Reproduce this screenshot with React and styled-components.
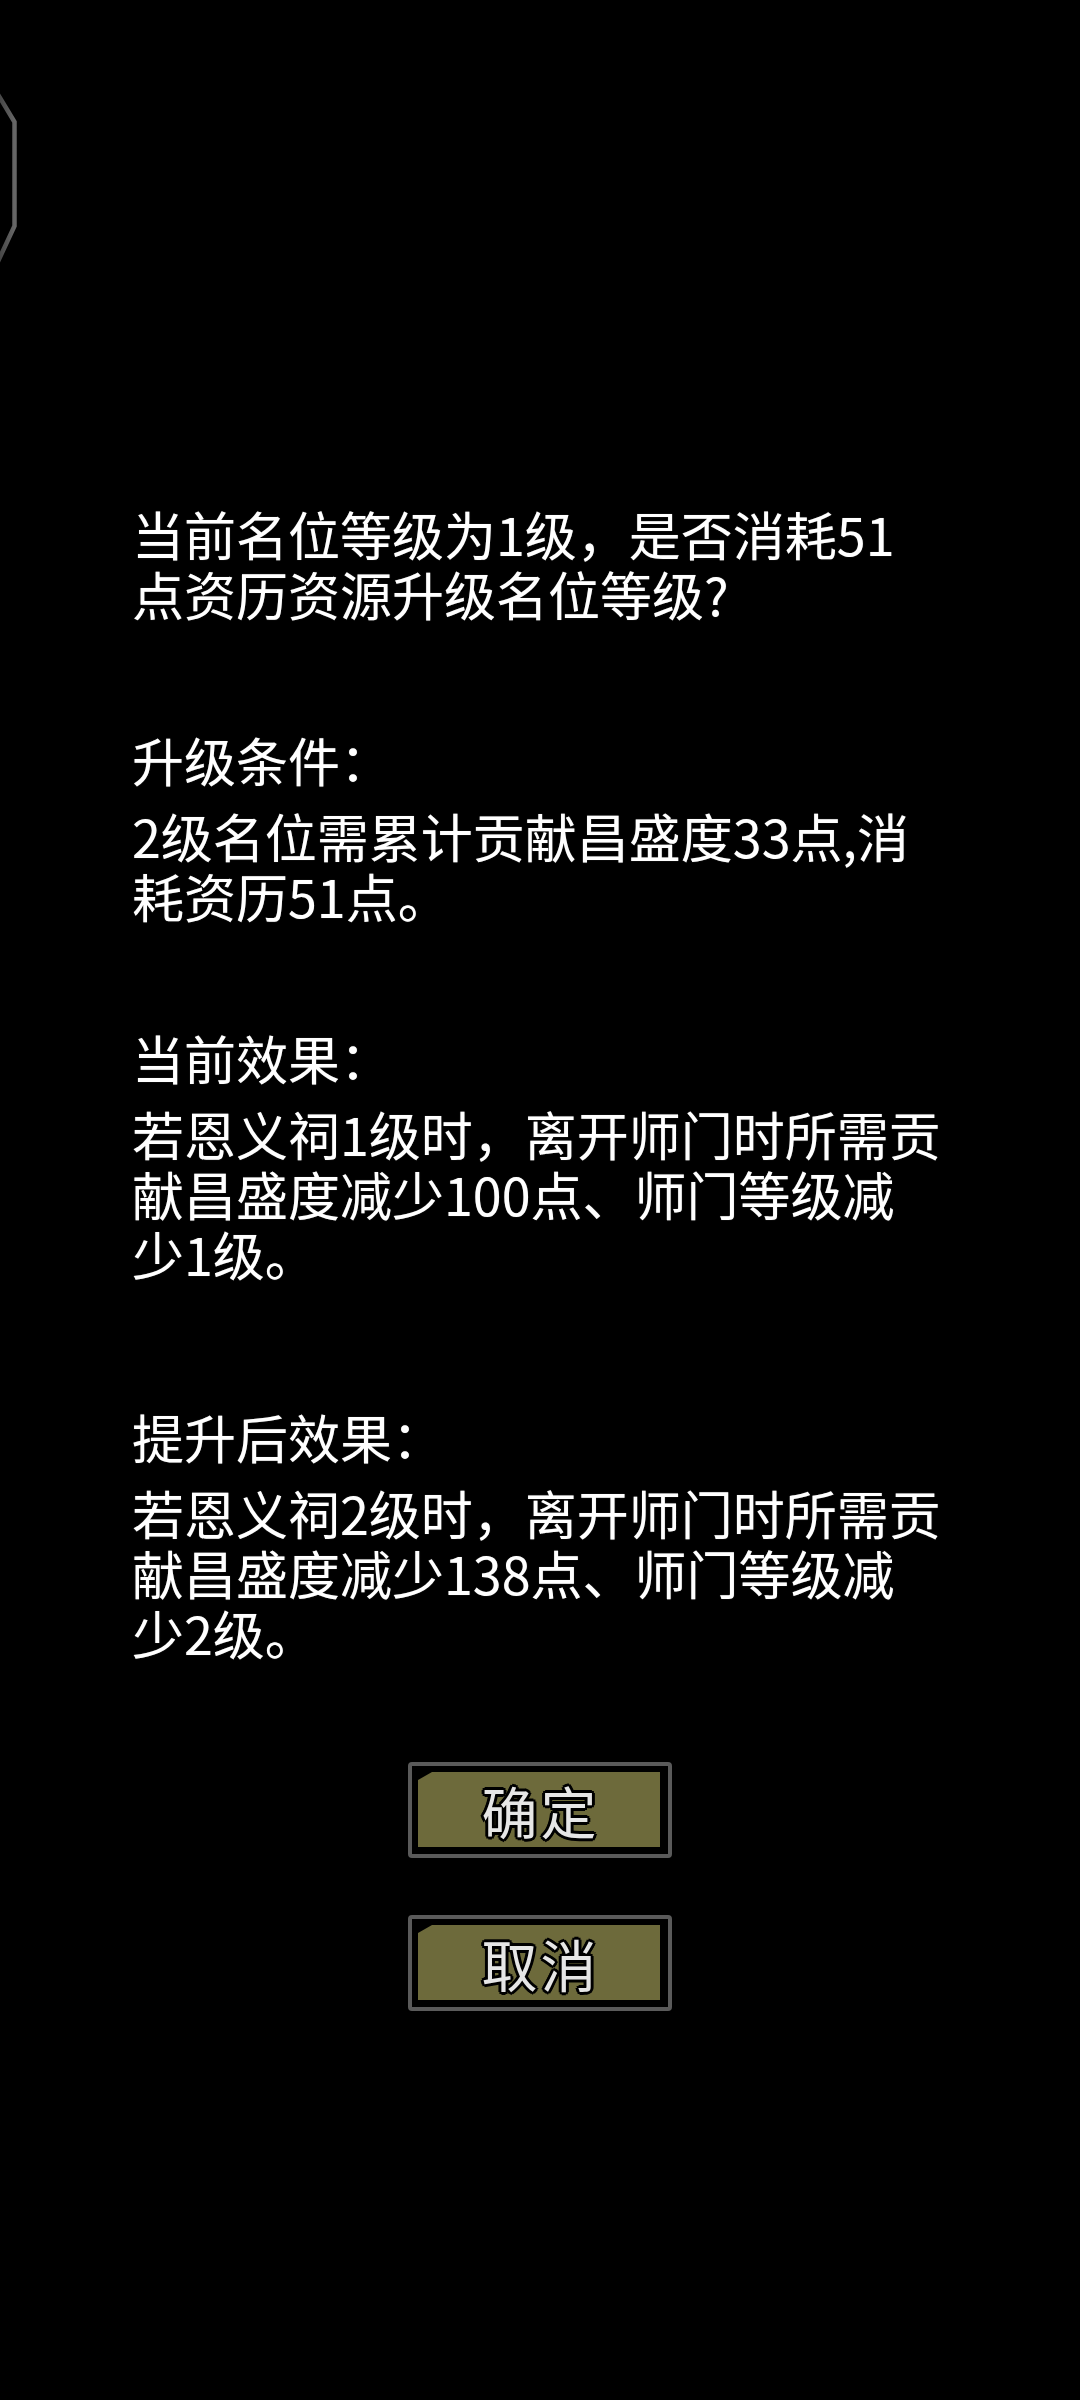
import React from "react";
import styled, { createGlobalStyle } from "styled-components";

const Global = createGlobalStyle`
  html, body {
    margin: 0;
    padding: 0;
    background: #000;
  }
  body {
    font-family: "Noto Sans CJK SC", "Noto Sans", sans-serif;
  }
`;

const Page = styled.div`
  position: relative;
  width: 1080px;
  height: 2400px;
  background: #000;
  overflow: hidden;
  box-sizing: border-box;
  padding-top: 504px;
  display: flex;
  flex-direction: column;
`;

const Frame = styled.svg`
  position: absolute;
  left: 0;
  top: 80px;
  width: 24px;
  height: 220px;
`;

const Content = styled.div`
  padding-left: 132px;
  display: flex;
  flex-direction: column;
`;

const Section = styled.section`
  margin-top: ${(p) => p.$gap || 0}px;
  display: flex;
  flex-direction: column;
  gap: 16px;
`;

const Heading = styled.div`
  font-size: 52px;
  font-weight: 400;
  line-height: 60px;
  color: #fff;
  text-shadow: 0 0 1px #666;
  white-space: nowrap;
`;

const Body = styled.p`
  margin: 0;
  width: 812px;
  font-size: 52px;
  font-weight: 400;
  line-height: 60px;
  color: #fff;
  text-shadow: 0 0 1px #666;
`;

const Buttons = styled.div`
  margin-top: 99px;
  display: flex;
  flex-direction: column;
  align-items: center;
  gap: 57px;
`;

const ButtonFrame = styled.button`
  width: 264px;
  height: 96px;
  box-sizing: border-box;
  border: 4px solid #5a5a5a;
  border-radius: 4px;
  background: #000;
  padding: 6px 8px 7px 6px;
  margin: 0;
  display: flex;
  cursor: pointer;
`;

const ButtonFace = styled.span`
  flex: 1;
  display: flex;
  align-items: center;
  justify-content: center;
  background: #6d6a3b;
  clip-path: polygon(14px 0, 100% 0, 100% 100%, 0 100%, 0 8px);
  font-family: "Noto Sans CJK SC", "Noto Sans", sans-serif;
  font-size: 56px;
  font-weight: 400;
  line-height: 1;
  letter-spacing: 3px;
  padding-left: 3px;
  color: #e6e6e6;
  text-shadow:
    3px 0 0 #000, -3px 0 0 #000, 0 3px 0 #000, 0 -3px 0 #000,
    2px 2px 0 #000, -2px 2px 0 #000, 2px -2px 0 #000, -2px -2px 0 #000;
`;

const sections = [
  {
    gap: 0,
    body: "当前名位等级为1级，是否消耗51点资历资源升级名位等级?",
  },
  {
    gap: 106,
    title: "升级条件：",
    body: "2级名位需累计贡献昌盛度33点,消耗资历51点。",
  },
  {
    gap: 102,
    title: "当前效果：",
    body: "若恩义祠1级时，离开师门时所需贡献昌盛度减少100点、师门等级减少1级。",
  },
  {
    gap: 123,
    title: "提升后效果：",
    body: "若恩义祠2级时，离开师门时所需贡献昌盛度减少138点、师门等级减少2级。",
  },
];

export default function App() {
  return (
    <>
      <Global />
      <Page>
        <Frame viewBox="0 0 24 220">
          <defs>
            <linearGradient id="edge" x1="0" y1="0" x2="1" y2="0">
              <stop offset="0" stopColor="#3a3a3a" />
              <stop offset="1" stopColor="#666" />
            </linearGradient>
          </defs>
          <polyline
            points="-6,8 14.5,42 14.5,146 -6,190"
            fill="none"
            stroke="url(#edge)"
            strokeWidth="4.5"
            strokeLinejoin="miter"
          />
        </Frame>
        <Content>
          {sections.map((s, i) => (
            <Section key={i} $gap={s.gap}>
              {s.title && <Heading>{s.title}</Heading>}
              <Body>{s.body}</Body>
            </Section>
          ))}
        </Content>
        <Buttons>
          <ButtonFrame type="button">
            <ButtonFace>确定</ButtonFace>
          </ButtonFrame>
          <ButtonFrame type="button">
            <ButtonFace>取消</ButtonFace>
          </ButtonFrame>
        </Buttons>
      </Page>
    </>
  );
}
